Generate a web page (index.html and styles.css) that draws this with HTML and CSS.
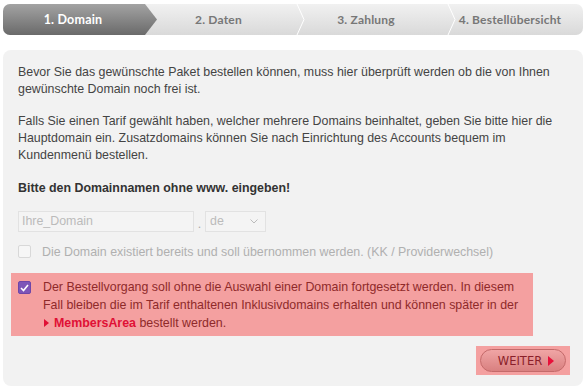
FILE: index.html
```html
<!DOCTYPE html>
<html lang="de">
<head>
<meta charset="utf-8">
<link rel="stylesheet" href="styles.css">
</head>
<body>
<div class="page">
  <div class="steps">
    <div class="step active">1. Domain</div>
    <div class="step">2. Daten</div>
    <div class="step">3. Zahlung</div>
    <div class="step last">4. Bestellübersicht</div>
    <svg class="sep s1" width="10" height="31" viewBox="0 0 10 31"><polyline points="1,0 8,15.5 1,31" fill="none" stroke="#fff" stroke-width="1"/></svg>
    <svg class="sep s2" width="10" height="31" viewBox="0 0 10 31"><polyline points="1,0 8,15.5 1,31" fill="none" stroke="#fff" stroke-width="1"/></svg>
  </div>
  <div class="panel">
    <p>Bevor Sie das gewünschte Paket bestellen können, muss hier überprüft werden ob die von Ihnen gewünschte Domain noch frei ist.</p>
    <p>Falls Sie einen Tarif gewählt haben, welcher mehrere Domains beinhaltet, geben Sie bitte hier die Hauptdomain ein. Zusatzdomains können Sie nach Einrichtung des Accounts bequem im Kundenmenü bestellen.</p>
    <p class="bold">Bitte den Domainnamen ohne www. eingeben!</p>
    <div class="domainrow">
      <div class="input">Ihre_Domain</div>
      <span class="dot">.</span>
      <div class="select">de <svg width="8" height="5" viewBox="0 0 8 5"><polyline points="0.5,0.5 4,4 7.5,0.5" fill="none" stroke="#bbb" stroke-width="1"/></svg></div>
    </div>
    <div class="checkrow disabled">
      <span class="cb"></span>
      <span>Die Domain existiert bereits und soll übernommen werden. (KK / Providerwechsel)</span>
    </div>
    <div class="alert">
      <span class="cb checked"><svg width="9" height="8" viewBox="0 0 9 8"><polyline points="1,4 3.5,6.5 8,1" fill="none" stroke="#fff" stroke-width="1.6"/></svg></span>
      <span>Der Bestellvorgang soll ohne die Auswahl einer Domain fortgesetzt werden. In diesem Fall bleiben die im Tarif enthaltenen Inklusivdomains erhalten und können später in der <a class="link"><span class="tri"></span>MembersArea</a> bestellt werden.</span>
    </div>
    <div class="actions">
      <div class="btnwrap"><div class="btn">WEITER <span class="btntri"></span></div></div>
    </div>
  </div>
</div>
</body>
</html>
```
FILE: styles.css
```css
* { box-sizing: border-box; }
html, body { margin: 0; padding: 0; background: #fff; }
body { font-family: "Liberation Sans", Arial, sans-serif; font-size: 12.4px; color: #444; }
.page { padding: 4px 3px 0 3px; width: 586px; }
.steps {
  position: relative;
  display: flex;
  height: 31px;
  border-radius: 7px;
  overflow: hidden;
  background: linear-gradient(#f1f1f1, #d9d9d9);
}
.step {
  flex: 1;
  display: flex;
  align-items: center;
  justify-content: center;
  font-family: Lato, "Open Sans", sans-serif;
  font-weight: 700;
  font-size: 12px;
  color: #777;
  letter-spacing: 0.2px;
}
.step.active {
  flex: 0 0 154px;
  color: #fff;
  background: linear-gradient(#a3a3a3, #6a6a6a);
  clip-path: polygon(0 0, 142px 0, 154px 50%, 142px 100%, 0 100%);
  padding-right: 14px;
  font-size: 12.5px;
}
.step:nth-child(2) { flex: 0 0 141px; padding-right: 18px; }
.step:nth-child(3) { flex: 0 0 150px; padding-right: 14px; }
.step.last { padding-right: 11px; }
.sep { position: absolute; top: 0; }
.s1 { left: 293px; }
.s2 { left: 444px; }
.panel {
  margin-top: 15px;
  background: #f2f2f2;
  border-radius: 8px;
  padding: 14px 15px 14px 15px;
  height: 336px;
}
p { margin: 0 0 15px 0; line-height: 17px; }
.bold { font-weight: 700; color: #333; margin-bottom: 15px; }
p.bold { margin-top: 0; position: relative; top: 1px; }
.domainrow { display: flex; align-items: center; height: 21px; }
.input {
  width: 176px; height: 21px;
  border: 1px solid #e2e2e2; background: #f4f4f4;
  color: #bbb; padding: 2px 3px; line-height: 15px;
}
.dot { color: #aaa; width: 11px; text-align: center; padding-top: 5px; }
.select {
  width: 61px; height: 21px;
  border: 1px solid #e2e2e2; background: #f4f4f4;
  color: #bbb; padding: 2px 4px; line-height: 15px;
  display: flex; justify-content: space-between; align-items: center;
}
.select svg { margin-right: 3px; }
.checkrow { display: flex; align-items: center; gap: 11px; margin-top: 11px; height: 17px; }
.checkrow.disabled { color: #b0b0b0; }
.cb {
  display: inline-flex; align-items: center; justify-content: center;
  width: 13px; height: 13px; border: 1px solid #d8d8d8; background: #f6f6f6;
  border-radius: 2px; flex: none;
}
.cb.checked { background: #7d55b8; border-color: #6e46a8; }
.alert {
  display: flex; align-items: flex-start; gap: 12px;
  margin: 13px 35px 0 -7px;
  background: #f4a0a0;
  color: #8f2a2a;
  padding: 5px 8px 4px 7px;
  line-height: 18px;
}
.alert .cb { margin-top: 3px; }
.link { color: #e01035; font-weight: 700; }
.tri {
  display: inline-block; width: 0; height: 0;
  border-left: 5px solid #e01035; border-top: 4px solid transparent; border-bottom: 4px solid transparent;
  margin: 0 5px 0 1px;
}
.actions { display: flex; justify-content: flex-end; margin-top: 10px; margin-right: -2px; }
.btnwrap { background: #f4a0a0; padding: 3px 4px; }
.btn {
  width: 86px; height: 23px;
  border-radius: 12px;
  border: 1px solid #c46a6a;
  background: linear-gradient(#f0a5a5, #d98080);
  color: #8a1f2a;
  font-family: "DejaVu Sans", sans-serif;
  font-size: 11.5px;
  display: flex; align-items: center; justify-content: center; gap: 6px;
  padding-left: 6px;
}
.btntri {
  display: inline-block; width: 0; height: 0;
  border-left: 6px solid #e8103a; border-top: 5px solid transparent; border-bottom: 5px solid transparent;
}
```
